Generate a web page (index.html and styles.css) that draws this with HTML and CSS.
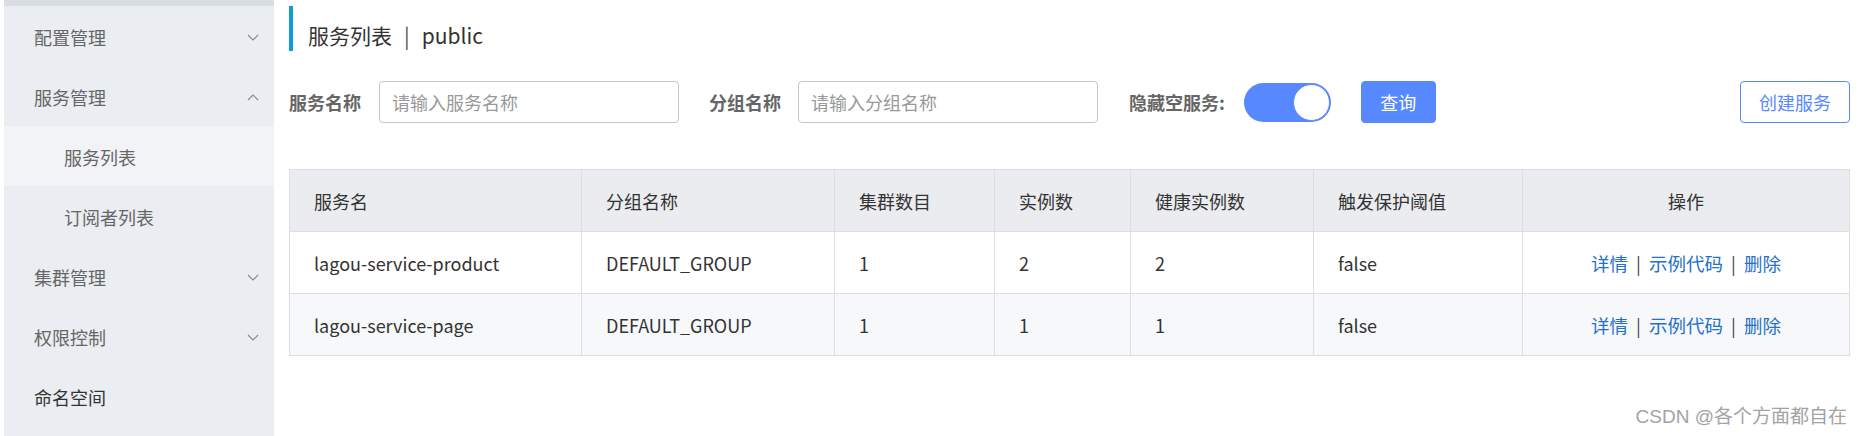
FILE: index.html
```html
<!DOCTYPE html>
<html lang="zh-CN">
<head>
<meta charset="utf-8">
<title>服务列表</title>
<link rel="stylesheet" href="styles.css">
</head>
<body>
<div class="app">
  <div class="gutter"></div>
  <aside class="sidebar">
    <div class="top-strip"></div>
    <div class="menu-item"><span>配置管理</span><svg class="chev" width="12" height="7" viewBox="0 0 12 7"><polyline points="1,1 6,6 11,1"/></svg></div>
    <div class="menu-item"><span>服务管理</span><svg class="chev" width="12" height="7" viewBox="0 0 12 7"><polyline points="1,6 6,1 11,6"/></svg></div>
    <div class="menu-item sub active"><span>服务列表</span></div>
    <div class="menu-item sub"><span>订阅者列表</span></div>
    <div class="menu-item"><span>集群管理</span><svg class="chev" width="12" height="7" viewBox="0 0 12 7"><polyline points="1,1 6,6 11,1"/></svg></div>
    <div class="menu-item"><span>权限控制</span><svg class="chev" width="12" height="7" viewBox="0 0 12 7"><polyline points="1,1 6,6 11,1"/></svg></div>
    <div class="menu-item dark"><span>命名空间</span></div>
  </aside>
  <main class="main">
    <div class="page-title">
      <span>服务列表</span><span class="sep">|</span><span>public</span>
    </div>
    <div class="filters">
      <label class="f-label">服务名称</label>
      <input class="f-input" type="text" placeholder="请输入服务名称">
      <label class="f-label second">分组名称</label>
      <input class="f-input" type="text" placeholder="请输入分组名称">
      <label class="f-label third">隐藏空服务:</label>
      <div class="switch"><div class="knob"></div></div>
      <button class="btn primary">查询</button>
      <button class="btn outline">创建服务</button>
    </div>
    <table class="grid">
      <colgroup>
        <col class="c1"><col class="c2"><col class="c3"><col class="c4"><col class="c5"><col class="c6"><col class="c7">
      </colgroup>
      <thead>
        <tr><th>服务名</th><th>分组名称</th><th>集群数目</th><th>实例数</th><th>健康实例数</th><th>触发保护阈值</th><th class="center">操作</th></tr>
      </thead>
      <tbody>
        <tr>
          <td>lagou-service-product</td><td>DEFAULT_GROUP</td><td>1</td><td>2</td><td>2</td><td>false</td>
          <td class="center"><a class="lnk">详情</a><span class="bar">|</span><a class="lnk">示例代码</a><span class="bar">|</span><a class="lnk">删除</a></td>
        </tr>
        <tr class="alt">
          <td>lagou-service-page</td><td>DEFAULT_GROUP</td><td>1</td><td>1</td><td>1</td><td>false</td>
          <td class="center"><a class="lnk">详情</a><span class="bar">|</span><a class="lnk">示例代码</a><span class="bar">|</span><a class="lnk">删除</a></td>
        </tr>
      </tbody>
    </table>
  </main>
</div>
<div class="watermark">CSDN @各个方面都自在</div>
</body>
</html>
```
FILE: styles.css
```css
html, body {
  margin: 0;
  padding: 0;
  background: #ffffff;
}
body {
  width: 1863px;
  height: 436px;
  overflow: hidden;
  position: relative;
  font-family: "Noto Sans CJK SC", "Noto Sans", sans-serif;
  color: #333333;
}
.app {
  display: flex;
  height: 436px;
}
.gutter {
  width: 4px;
  flex: none;
}
.sidebar {
  width: 270px;
  flex: none;
  background: #eaedf1;
  display: flex;
  flex-direction: column;
}
.top-strip {
  height: 6px;
  flex: none;
  background: #d9dde4;
}
.menu-item {
  box-sizing: border-box;
  height: 60px;
  flex: none;
  display: flex;
  align-items: center;
  justify-content: space-between;
  padding: 2px 15px 0 30px;
  font-size: 18px;
  color: #666666;
}
.menu-item.sub {
  padding-left: 60px;
}
.menu-item.active {
  background: #f1f3f6;
}
.menu-item.dark {
  color: #333333;
}
.chev polyline {
  fill: none;
  stroke: #8a8a8a;
  stroke-width: 1.2;
}
.main {
  flex: 1;
  padding: 6px 14px 0 15px;
  display: flex;
  flex-direction: column;
}
.page-title {
  box-sizing: border-box;
  height: 45px;
  border-left: 4px solid #0d9dd5;
  padding: 13px 0 0 15px;
  display: flex;
  align-items: center;
  font-size: 21px;
  color: #333333;
}
.page-title .sep {
  margin: 0 12px;
  color: #555555;
}
.filters {
  margin-top: 30px;
  height: 42px;
  display: flex;
  align-items: center;
}
.f-label {
  font-size: 18px;
  font-weight: bold;
  color: #666666;
  margin-right: 18px;
}
.f-label.second {
  margin-left: 30px;
  margin-right: 17px;
}
.f-label.third {
  margin-left: 31px;
  margin-right: 19px;
}
.f-input {
  box-sizing: border-box;
  width: 300px;
  height: 42px;
  border: 1px solid #c4c6cf;
  border-radius: 4px;
  padding: 0 12px;
  font-family: "Noto Sans CJK SC", "Noto Sans", sans-serif;
  font-size: 18px;
  color: #333333;
  outline: none;
  background: #ffffff;
}
.f-input::placeholder {
  color: #999999;
}
.switch {
  box-sizing: border-box;
  width: 87px;
  height: 39px;
  border-radius: 20px;
  background: #5888ff;
  display: flex;
  align-items: center;
  justify-content: flex-end;
  padding: 0 1px;
}
.knob {
  box-sizing: border-box;
  width: 37px;
  height: 37px;
  border-radius: 50%;
  background: #ffffff;
  border: 1px solid #5888ff;
}
.btn {
  box-sizing: border-box;
  height: 42px;
  border-radius: 4px;
  font-family: "Noto Sans CJK SC", "Noto Sans", sans-serif;
  font-size: 18px;
  padding: 0;
  cursor: pointer;
}
.btn.primary {
  width: 75px;
  margin-left: 30px;
  background: #5888ff;
  border: 1px solid #5888ff;
  color: #ffffff;
}
.btn.outline {
  width: 110px;
  margin-left: auto;
  background: #ffffff;
  border: 1px solid #5888ff;
  color: #5888ff;
}
.grid {
  margin-top: 46px;
  width: 1560px;
  border-collapse: collapse;
  table-layout: fixed;
  font-size: 18px;
}
.c1 { width: 292px; }
.c2 { width: 253px; }
.c3 { width: 160px; }
.c4 { width: 136px; }
.c5 { width: 183px; }
.c6 { width: 209px; }
.c7 { width: 327px; }
.grid th, .grid td {
  border: 1px solid #dcdee3;
  height: 61px;
  padding: 0 0 0 24px;
  text-align: left;
  font-weight: normal;
  color: #333333;
  white-space: nowrap;
}
.grid th {
  background: #ebecf0;
}
.grid tr.alt td {
  background: #f7f8fa;
}
.grid .center {
  text-align: center;
  padding-left: 0;
}
.lnk {
  color: #2570c8;
  font-size: 18.5px;
}
.bar {
  color: #444444;
  margin: 0 8px;
}
.watermark {
  position: absolute;
  right: 16px;
  top: 401px;
  font-family: "Liberation Sans", "Noto Sans CJK SC", sans-serif;
  font-size: 19px;
  color: #a3a3a3;
}
```
